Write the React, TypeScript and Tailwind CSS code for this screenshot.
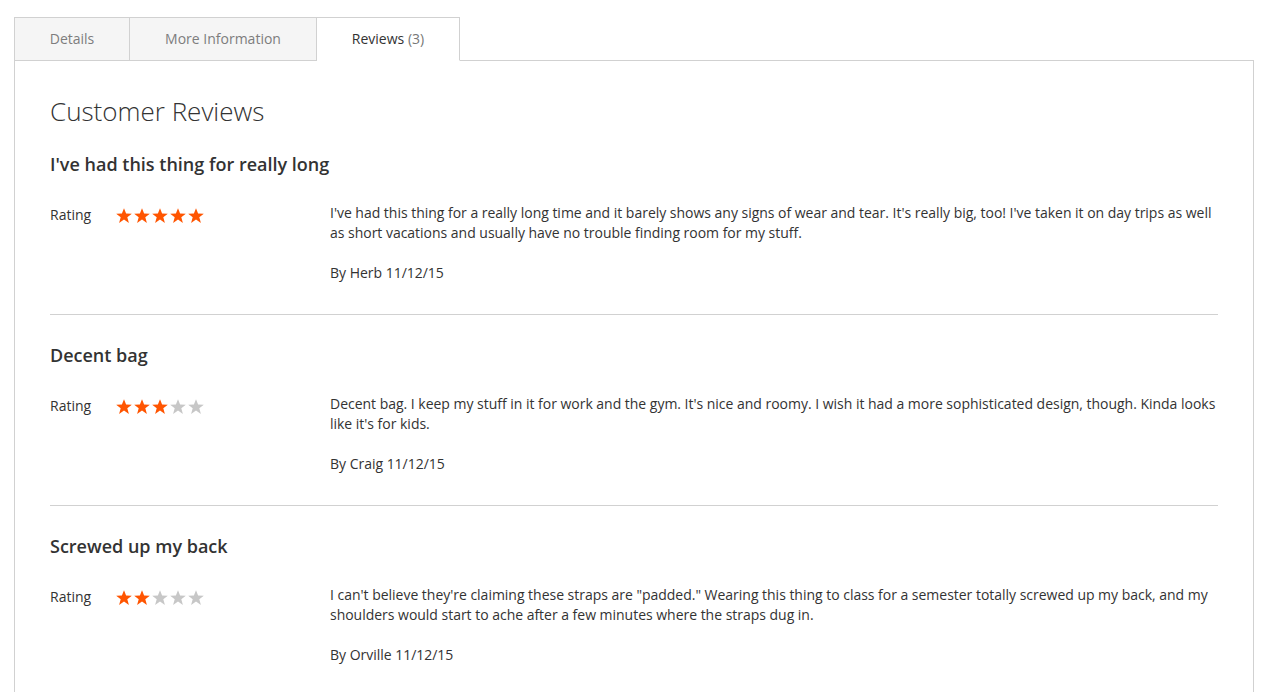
import React from "react";

type Review = {
  title: string;
  rating: number;
  text: string;
  author: string;
  date: string;
};

const reviews: Review[] = [
  {
    title: "I've had this thing for really long",
    rating: 5,
    text: "I've had this thing for a really long time and it barely shows any signs of wear and tear. It's really big, too! I've taken it on day trips as well as short vacations and usually have no trouble finding room for my stuff.",
    author: "Herb",
    date: "11/12/15",
  },
  {
    title: "Decent bag",
    rating: 3,
    text: "Decent bag. I keep my stuff in it for work and the gym. It's nice and roomy. I wish it had a more sophisticated design, though. Kinda looks like it's for kids.",
    author: "Craig",
    date: "11/12/15",
  },
  {
    title: "Screwed up my back",
    rating: 2,
    text: "I can't believe they're claiming these straps are \"padded.\" Wearing this thing to class for a semester totally screwed up my back, and my shoulders would start to ache after a few minutes where the straps dug in.",
    author: "Orville",
    date: "11/12/15",
  },
];

const Star = ({ filled }: { filled: boolean }) => (
  <svg width="18" height="18" viewBox="0 0 18 18" className="block">
    <polygon
      points="9,1.2 11.1,6.6 16.8,6.8 12.3,10.3 13.9,15.9 9,12.6 4.1,15.9 5.7,10.3 1.2,6.8 6.9,6.6"
      fill={filled ? "#ff5501" : "#c7c7c7"}
    />
  </svg>
);

const Stars = ({ value }: { value: number }) => (
  <div className="flex mt-[4px]">
    {[1, 2, 3, 4, 5].map((i) => (
      <Star key={i} filled={i <= value} />
    ))}
  </div>
);

const ReviewItem = ({ review, last }: { review: Review; last: boolean }) => (
  <div className={last ? "pb-[31px]" : "pb-[31px] border-b border-[#d1d1d1] mb-[28px]"}>
    <h3 className="text-[18px] leading-[24px] font-semibold text-[#333]">{review.title}</h3>
    <div className="flex mt-[27px]">
      <div className="w-[280px] flex items-start shrink-0">
        <span className="w-[65px] mt-[2px] text-[14px] leading-[20px] text-[#333]">Rating</span>
        <Stars value={review.rating} />
      </div>
      <div className="flex-1 -mr-[2px] text-[14px] leading-[20px] tracking-[-0.02px] text-[#333]">
        <p>{review.text}</p>
        <p className="mt-[20px]">
          By {review.author} {review.date}
        </p>
      </div>
    </div>
  </div>
);

export default function App() {
  return (
    <div className="min-h-[692px] bg-white px-[14px] pt-[17px]" style={{ fontFamily: '"Open Sans", sans-serif' }}>
      <div className="flex">
        <div className="w-[116px] -mb-px border border-[#d1d1d1] bg-[#f5f5f5] py-[11px] text-center text-[14px] leading-[20px] text-[#7d7d7d]">
          Details
        </div>
        <div className="w-[187px] -mb-px border border-l-0 border-[#d1d1d1] bg-[#f5f5f5] py-[11px] text-center text-[14px] leading-[20px] text-[#7d7d7d]">
          More Information
        </div>
        <div className="w-[143px] relative z-10 -mb-px border border-l-0 border-b-white border-[#d1d1d1] bg-white py-[11px] text-center text-[14px] leading-[20px] text-[#333]">
          Reviews <span className="text-[#777]">(3)</span>
        </div>
      </div>
      <div className="border border-b-0 border-[#d1d1d1] px-[35px] pt-[34px] min-h-[640px]">
        <h2 className="text-[26px] leading-[32px] font-light text-[#333] mb-[25px]">Customer Reviews</h2>
        {reviews.map((r, i) => (
          <ReviewItem key={i} review={r} last={i === reviews.length - 1} />
        ))}
      </div>
    </div>
  );
}
